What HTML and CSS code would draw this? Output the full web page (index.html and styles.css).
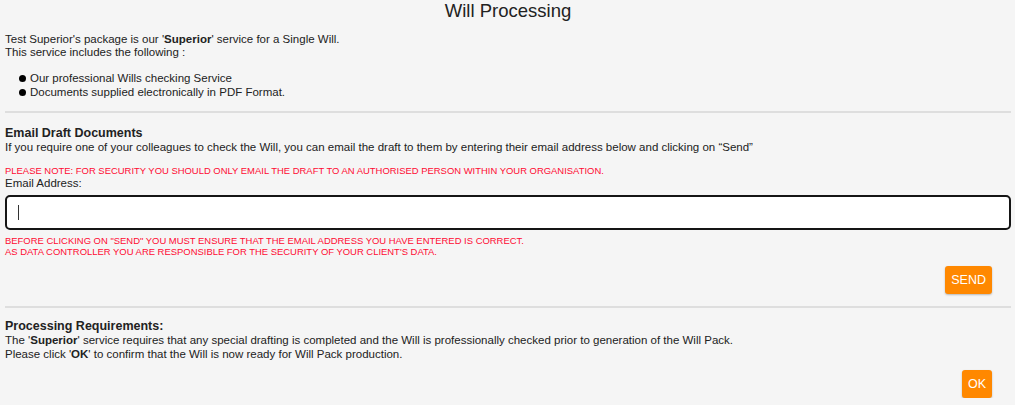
FILE: index.html
```html
<!DOCTYPE html>
<html>
<head>
<meta charset="utf-8">
<link rel="stylesheet" href="styles.css">
</head>
<body>
<div class="page">
  <h1 class="title">Will Processing</h1>
  <p class="intro">Test Superior's package is our '<b>Superior</b>' service for a Single Will.<br>This service includes the following :</p>
  <ul class="features">
    <li>Our professional Wills checking Service</li>
    <li>Documents supplied electronically in PDF Format.</li>
  </ul>
  <hr class="rule">
  <section class="email">
    <h2 class="heading">Email Draft Documents</h2>
    <p class="text">If you require one of your colleagues to check the Will, you can email the draft to them by entering their email address below and clicking on “Send”</p>
    <p class="warn warn-top">PLEASE NOTE: FOR SECURITY YOU SHOULD ONLY EMAIL THE DRAFT TO AN AUTHORISED PERSON WITHIN YOUR ORGANISATION.</p>
    <label class="label" for="email">Email Address:</label>
    <div class="input"><span class="caret"></span></div>
    <p class="warn warn-bottom">BEFORE CLICKING ON "SEND" YOU MUST ENSURE THAT THE EMAIL ADDRESS YOU HAVE ENTERED IS CORRECT.<br>AS DATA CONTROLLER YOU ARE RESPONSIBLE FOR THE SECURITY OF YOUR CLIENT'S DATA.</p>
    <div class="actions actions-send"><button class="btn">SEND</button></div>
  </section>
  <hr class="rule">
  <section class="processing">
    <h2 class="heading">Processing Requirements:</h2>
    <p class="text">The '<b>Superior</b>' service requires that any special drafting is completed and the Will is professionally checked prior to generation of the Will Pack.<br>Please click '<b>OK</b>' to confirm that the Will is now ready for Will Pack production.</p>
    <div class="actions actions-ok"><button class="btn">OK</button></div>
  </section>
</div>
</body>
</html>
```

FILE: styles.css
```css
* { box-sizing: border-box; }
html, body { margin: 0; padding: 0; }
body {
  background: #f5f5f5;
  color: #222;
  font-family: "Liberation Sans", Arial, sans-serif;
  font-size: 11.5px;
}
.page { padding: 0 4px 0 5px; }
.title {
  margin: 0;
  font-size: 18.5px;
  font-weight: normal;
  line-height: 21px;
  text-align: center;
  color: #222;
}
.intro {
  margin: 12px 0 0;
  line-height: 13px;
}
.features {
  margin: 12px 0 0;
  padding: 0 0 0 14px;
  list-style: none;
}
.features li {
  position: relative;
  line-height: 14px;
  padding-left: 11px;
}
.features li::before {
  content: "";
  position: absolute;
  left: 0;
  top: 4px;
  width: 7px;
  height: 7px;
  border-radius: 50%;
  background: #000;
}
.rule {
  border: 0;
  border-top: 2px solid #dedede;
  margin: 12px 0 0;
  height: 0;
}
.heading {
  margin: 0;
  font-size: 12.5px;
  font-weight: bold;
  line-height: 14px;
  color: #222;
}
.email .heading { margin-top: 13px; }
.text { margin: 0; line-height: 14px; }
.warn {
  color: #ff0a32;
  font-size: 9.45px;
  margin: 0;
  line-height: 11px;
}
.warn-top { margin-top: 11px; }
.label { display: block; line-height: 13px; margin-top: 1px; }
.input {
  margin-top: 5px;
  height: 35px;
  background: #fff;
  border: 2px solid #151515;
  border-radius: 5px;
  display: flex;
  align-items: center;
  padding-left: 11px;
}
.caret { width: 1px; height: 15px; background: #333; }
.warn-bottom { margin-top: 5px; }
.actions { display: flex; justify-content: flex-end; }
.actions-send { margin-top: 9px; padding-right: 19px; }
.btn {
  background: #ff8800;
  color: #fff;
  border: 0;
  border-radius: 3px;
  font-family: "Liberation Sans", Arial, sans-serif;
  font-size: 12.5px;
  height: 28px;
  padding: 0 6px;
  box-shadow: 0 1px 2px rgba(0,0,0,0.25);
}
.processing .heading { margin-top: 11px; }
.actions-ok { margin-top: 9px; padding-right: 19px; }
```
